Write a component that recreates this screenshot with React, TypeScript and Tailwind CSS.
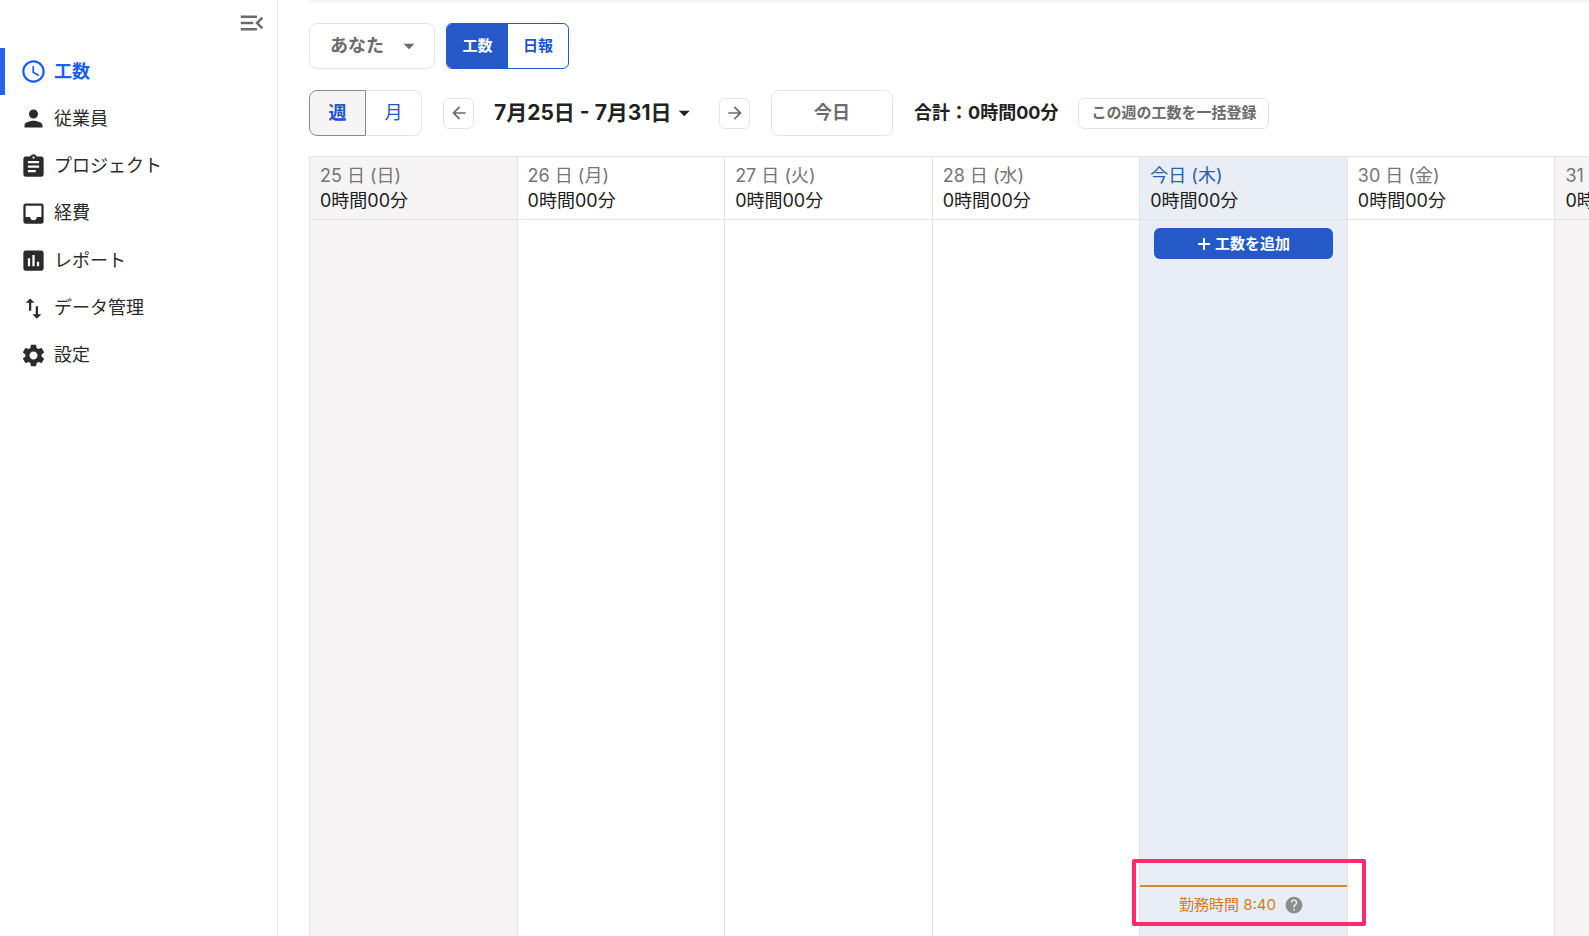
import React from "react";
import type { IconType } from "react-icons";
import {
  MdAccessTime,
  MdArrowBack,
  MdArrowDropDown,
  MdArrowForward,
  MdAssessment,
  MdAssignment,
  MdHelp,
  MdMenuOpen,
  MdInbox,
  MdPerson,
  MdSettings,
  MdSwapVert,
} from "react-icons/md";

const navItems: { label: string; icon: IconType; active?: boolean }[] = [
  { label: "工数", icon: MdAccessTime, active: true },
  { label: "従業員", icon: MdPerson },
  { label: "プロジェクト", icon: MdAssignment },
  { label: "経費", icon: MdInbox },
  { label: "レポート", icon: MdAssessment },
  { label: "データ管理", icon: MdSwapVert },
  { label: "設定", icon: MdSettings },
];

type Day = { label: string; total: string; kind?: "weekend" | "today" };

const days: Day[] = [
  { label: "25 日 (日)", total: "0時間00分", kind: "weekend" },
  { label: "26 日 (月)", total: "0時間00分" },
  { label: "27 日 (火)", total: "0時間00分" },
  { label: "28 日 (水)", total: "0時間00分" },
  { label: "今日 (木)", total: "0時間00分", kind: "today" },
  { label: "30 日 (金)", total: "0時間00分" },
  { label: "31 日 (土)", total: "0時間00分", kind: "weekend" },
];

function dayBackground(kind: Day["kind"]) {
  if (kind === "weekend") return "bg-[#f6f4f5]";
  if (kind === "today") return "bg-[#e8edf6]";
  return "bg-white";
}

function PlusIcon() {
  return (
    <svg width="14" height="14" viewBox="0 0 14 14" fill="none" stroke="currentColor" strokeWidth="2" aria-hidden="true">
      <path d="M7 1v12M1 7h12" />
    </svg>
  );
}

function Sidebar() {
  return (
    <aside className="flex w-[278px] shrink-0 flex-col border-r border-[#e4e4e4]">
      <div className="flex h-12 items-start justify-end pt-2 pr-[10px]">
        <button type="button" aria-label="メニューを閉じる" className="text-[#6b6b6b]">
          <MdMenuOpen size={30} />
        </button>
      </div>
      <nav>
        <ul className="grid h-[331px] auto-rows-fr">
          {navItems.map(({ label, icon: Icon, active }) => (
            <li key={label}>
              <a
                href="#"
                className={
                  active
                    ? "flex h-full items-center gap-[7px] border-l-[5px] border-[#2563eb] pl-[15px] font-bold text-[#1a5ff0]"
                    : "flex h-full items-center gap-[7px] border-l-[5px] border-transparent pl-[15px] text-[#2b2b2b]"
                }
              >
                <Icon size={27} />
                {label}
              </a>
            </li>
          ))}
        </ul>
      </nav>
    </aside>
  );
}

function Toolbar() {
  return (
    <>
      <div className="mt-5 flex items-center gap-[11px]">
        <button
          type="button"
          className="flex h-[46px] w-[126px] items-center justify-end gap-3 rounded-lg border border-[#e4e4e4] pr-3 font-bold text-[#6b6b6b]"
        >
          あなた
          <MdArrowDropDown size={26} />
        </button>
        <div className="flex h-[46px] overflow-hidden rounded-md border border-[#2559c8] text-[15px] font-bold">
          <button type="button" className="w-[61px] bg-[#2559c8] text-white">
            工数
          </button>
          <button type="button" className="w-[60px] text-[#1c55cc]">
            日報
          </button>
        </div>
      </div>

      <div className="mt-[21px] flex items-center whitespace-nowrap">
        <div className="flex h-[46px]">
          <button
            type="button"
            className="w-[57px] rounded-l-lg border border-[#8a8a8a] bg-[#f6f4f5] font-bold text-[#1c55cc]"
          >
            週
          </button>
          <button
            type="button"
            className="w-14 rounded-r-lg border border-l-0 border-[#e4e4e4] text-[#1c55cc]"
          >
            月
          </button>
        </div>
        <button
          type="button"
          aria-label="前の週"
          className="ml-[21px] flex size-[31px] items-center justify-center rounded-md border border-[#e4e4e4] text-[#6b6b6b]"
        >
          <MdArrowBack size={20} />
        </button>
        <button
          type="button"
          className="ml-5 flex w-[204px] items-center text-[21px] font-bold text-[#222]"
        >
          7月25日 - 7月31日
          <MdArrowDropDown size={28} />
        </button>
        <button
          type="button"
          aria-label="次の週"
          className="ml-[21px] flex size-[31px] items-center justify-center rounded-md border border-[#e4e4e4] text-[#6b6b6b]"
        >
          <MdArrowForward size={20} />
        </button>
        <button
          type="button"
          className="ml-[21px] h-[46px] w-[122px] rounded-lg border border-[#e4e4e4] font-bold text-[#6b6b6b]"
        >
          今日
        </button>
        <p className="ml-[21px] font-bold text-[#222]">合計：0時間00分</p>
        <button
          type="button"
          className="ml-5 h-[31px] rounded-md border border-[#e4e4e4] px-3 text-[15px] font-bold text-[#6b6b6b]"
        >
          この週の工数を一括登録
        </button>
      </div>
    </>
  );
}

function TodayColumn() {
  return (
    <>
      <div className="px-[14px] pt-2">
        <button
          type="button"
          className="flex h-[31px] w-full items-center justify-center gap-1 rounded-md bg-[#2559c8] text-[15px] font-bold text-white"
        >
          <PlusIcon />
          工数を追加
        </button>
      </div>
      <div className="relative mt-[626px] flex items-center justify-center gap-2 border-t-2 border-[#d28a32] pt-[6px] pr-1 text-[15px] text-[#d27c1e]">
        勤務時間 8:40
        <MdHelp size={20} className="text-[#8c8c8c]" />
        <div className="pointer-events-none absolute -top-7 -right-[19px] -left-2 h-[67px] rounded-xs border-4 border-[#ff2a6d]" />
      </div>
    </>
  );
}

function WeekTable() {
  return (
    <table className="h-full w-full min-w-[1454px] table-fixed border-collapse">
      <thead>
        <tr className="h-[63px]">
          {days.map((day) => (
            <th
              key={day.label}
              scope="col"
              className={`${dayBackground(day.kind)} h-[63px] border border-[#e4e4e4] pl-[10px] text-left align-middle leading-[25px] font-normal`}
            >
              <span className={day.kind === "today" ? "block text-[#2a5fa8]" : "block text-[#757575]"}>
                {day.label}
              </span>
              <span className="block text-[#1c1c1c]">{day.total}</span>
            </th>
          ))}
        </tr>
      </thead>
      <tbody>
        <tr>
          {days.map((day) => (
            <td
              key={day.label}
              className={`${dayBackground(day.kind)} border-x border-t border-[#e4e4e4] align-top`}
            >
              {day.kind === "today" && <TodayColumn />}
            </td>
          ))}
        </tr>
      </tbody>
    </table>
  );
}

export default function App() {
  return (
    <div className="flex h-screen overflow-hidden bg-white font-['Inter','Noto_Sans_CJK_JP',sans-serif] text-lg">
      <Sidebar />
      <main className="flex min-w-0 flex-1 flex-col pl-[31px]">
        <div className="h-[3px] shrink-0 bg-[#f5f5f5]" />
        <Toolbar />
        <div className="mt-5 min-h-0 flex-1 overflow-hidden">
          <WeekTable />
        </div>
      </main>
    </div>
  );
}
